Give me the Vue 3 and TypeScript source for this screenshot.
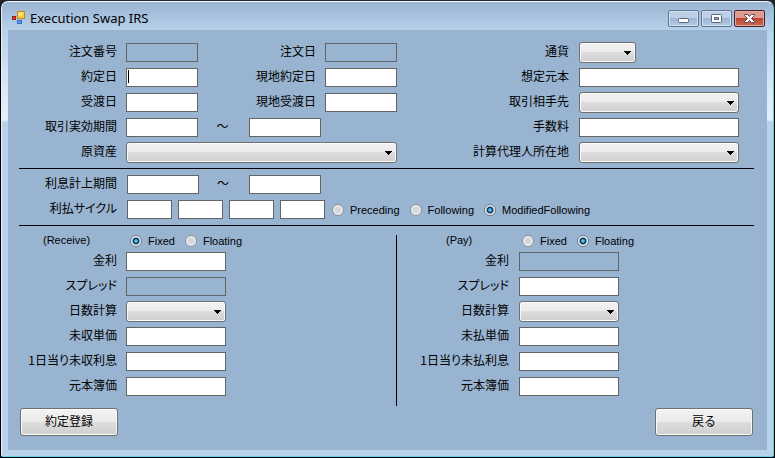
<script setup lang="ts">
import { onMounted, reactive, ref } from 'vue'

interface LegField {
  id: string
  label: string
  kind: 'text' | 'select'
  readonly?: boolean
}

interface Leg {
  name: string
  title: string
  fields: LegField[]
}

const legs: Leg[] = [
  {
    name: 'receive',
    title: '(Receive)',
    fields: [
      { id: 'rate', label: '金利', kind: 'text' },
      { id: 'spread', label: 'スプレッド', kind: 'text', readonly: true },
      { id: 'daycount', label: '日数計算', kind: 'select' },
      { id: 'accrued', label: '未収単価', kind: 'text' },
      { id: 'daily', label: '1日当り未収利息', kind: 'text' },
      { id: 'book', label: '元本簿価', kind: 'text' },
    ],
  },
  {
    name: 'pay',
    title: '(Pay)',
    fields: [
      { id: 'rate', label: '金利', kind: 'text', readonly: true },
      { id: 'spread', label: 'スプレッド', kind: 'text' },
      { id: 'daycount', label: '日数計算', kind: 'select' },
      { id: 'accrued', label: '未払単価', kind: 'text' },
      { id: 'daily', label: '1日当り未払利息', kind: 'text' },
      { id: 'book', label: '元本簿価', kind: 'text' },
    ],
  },
]

const conventions = ['Preceding', 'Following', 'ModifiedFollowing']
const convention = ref('ModifiedFollowing')
const rateType = reactive<Record<string, string>>({ receive: 'Fixed', pay: 'Floating' })
const tradeDate = ref<HTMLInputElement | null>(null)

onMounted(() => tradeDate.value?.focus())
</script>

<template>
  <div class="desktop">
    <div class="window">
      <header class="titlebar">
        <svg class="app-icon" viewBox="0 0 13 13" width="13" height="13" aria-hidden="true">
          <rect x="5.5" y="0.5" width="7" height="7" fill="#f8cf3c" stroke="#c08a1c" />
          <rect x="6.5" y="1.5" width="4" height="3" fill="#fdeb8c" />
          <rect x="0.5" y="5.5" width="3" height="3" fill="#d8452c" stroke="#9c1f14" />
          <rect x="5.5" y="9.5" width="4" height="3" fill="#5d9df0" stroke="#3a6cc4" />
        </svg>
        <h1 class="title">Execution Swap IRS</h1>
        <div class="caption-buttons">
          <button class="caption" type="button" aria-label="最小化">
            <svg viewBox="0 0 13 11" width="13" height="11">
              <rect x="1.5" y="5.5" width="10" height="4" rx="1" fill="#fff" stroke="#5a6679" />
            </svg>
          </button>
          <button class="caption" type="button" aria-label="最大化">
            <svg viewBox="0 0 13 11" width="13" height="11">
              <rect x="1.5" y="1.5" width="10" height="8" rx="1" fill="#fff" stroke="#5a6679" />
              <rect x="4.5" y="4.5" width="4" height="2" fill="#9db6d2" stroke="#5a6679" />
            </svg>
          </button>
          <button class="caption close" type="button" aria-label="閉じる">
            <svg viewBox="0 0 13 11" width="13" height="11">
              <path
                d="M1.5 1.5h3l2 2 2-2h3v1l-3 3 3 3v1h-3l-2-2-2 2h-3v-1l3-3-3-3z"
                fill="#fff"
                stroke="#5c4650"
              />
            </svg>
          </button>
        </div>
      </header>

      <form class="client" @submit.prevent>
        <section class="halves trade">
          <div>
            <div class="row">
              <label class="label" for="order-no">注文番号</label>
              <input id="order-no" class="box date" type="text" readonly />
              <label class="label second" for="order-date">注文日</label>
              <input id="order-date" class="box date" type="text" readonly />
            </div>
            <div class="row">
              <label class="label" for="trade-date">約定日</label>
              <input
                id="trade-date"
                ref="tradeDate"
                class="box date first-field"
                type="text"
                placeholder=" "
              />
              <label class="label second" for="local-trade-date">現地約定日</label>
              <input id="local-trade-date" class="box date" type="text" />
            </div>
            <div class="row">
              <label class="label" for="settle-date">受渡日</label>
              <input id="settle-date" class="box date" type="text" />
              <label class="label second" for="local-settle-date">現地受渡日</label>
              <input id="local-settle-date" class="box date" type="text" />
            </div>
            <div class="row">
              <label class="label" for="effective-from">取引実効期間</label>
              <input id="effective-from" class="box date" type="text" />
              <label class="tilde" for="effective-to">～</label>
              <input id="effective-to" class="box date" type="text" />
            </div>
            <div class="row">
              <label class="label" for="underlying">原資産</label>
              <select id="underlying" class="drop wide"></select>
            </div>
          </div>
          <div class="terms">
            <div class="row">
              <label class="label term" for="currency">通貨</label>
              <select id="currency" class="drop currency"></select>
            </div>
            <div class="row">
              <label class="label term" for="notional">想定元本</label>
              <input id="notional" class="box wide" type="text" />
            </div>
            <div class="row">
              <label class="label term" for="counterparty">取引相手先</label>
              <select id="counterparty" class="drop wide"></select>
            </div>
            <div class="row">
              <label class="label term" for="fee">手数料</label>
              <input id="fee" class="box wide" type="text" />
            </div>
            <div class="row">
              <label class="label term" for="agent">計算代理人所在地</label>
              <select id="agent" class="drop wide"></select>
            </div>
          </div>
        </section>

        <section class="schedule">
          <div class="row">
            <label class="label" for="accrual-from">利息計上期間</label>
            <input id="accrual-from" class="box date" type="text" />
            <label class="tilde" for="accrual-to">～</label>
            <input id="accrual-to" class="box date" type="text" />
          </div>
          <div class="row">
            <label class="label" for="cycle-1">利払サイクル</label>
            <div class="cycles">
              <input v-for="n in 4" :id="`cycle-${n}`" :key="n" class="box cycle" type="text" />
            </div>
            <div class="radios">
              <label v-for="name in conventions" :key="name" class="radio">
                <input v-model="convention" type="radio" name="convention" :value="name" />
                {{ name }}
              </label>
            </div>
          </div>
        </section>

        <section class="legs">
          <div v-for="leg in legs" :key="leg.name" class="leg" :class="leg.name">
            <div class="row heading">
              <span class="leg-title">{{ leg.title }}</span>
              <div class="radios">
                <label v-for="type in ['Fixed', 'Floating']" :key="type" class="radio">
                  <input
                    v-model="rateType[leg.name]"
                    type="radio"
                    :name="`${leg.name}-type`"
                    :value="type"
                  />
                  {{ type }}
                </label>
              </div>
            </div>
            <div v-for="field in leg.fields" :key="field.id" class="row">
              <label class="label" :for="`${leg.name}-${field.id}`">{{ field.label }}</label>
              <select
                v-if="field.kind === 'select'"
                :id="`${leg.name}-${field.id}`"
                class="drop amount"
              ></select>
              <input
                v-else
                :id="`${leg.name}-${field.id}`"
                class="box amount"
                type="text"
                :readonly="field.readonly"
              />
            </div>
          </div>
          <div class="divider"></div>
        </section>

        <footer class="actions">
          <button class="push" type="submit">約定登録</button>
          <button class="push" type="button">戻る</button>
        </footer>
      </form>
    </div>
  </div>
</template>

<style>
body {
  margin: 0;
  background: #000;
}
</style>

<style scoped>
.desktop {
  box-sizing: border-box;
  min-height: 100vh;
  padding: 1px;
  display: flex;
  background: linear-gradient(#24262b, #000 30px);
  color: #000;
  font: 12px/16px 'Noto Sans CJK JP', sans-serif;
}

.desktop * {
  box-sizing: border-box;
}

.window {
  flex: 1;
  display: flex;
  flex-direction: column;
  padding: 0 6px 6px;
  border: 1px solid #5fd0e8;
  border-top-color: #f0f7ff;
  border-left-color: #e6f1fb;
  border-radius: 7px 7px 2px 2px;
  background: linear-gradient(#9ab3d2, #b7d0ea 28px, #dce9f7 90px, #e4effa 118px, #b9d1ea 120px);
}

.titlebar {
  display: flex;
  align-items: center;
  height: 28px;
  padding: 4px 2px 0 4px;
}

.app-icon {
  margin-bottom: 2px;
}

.title {
  flex: 1;
  margin: 0 0 0 5px;
  font: 13px/18px 'Noto Sans', sans-serif;
}

.caption-buttons {
  display: flex;
  gap: 2px;
}

.caption {
  display: flex;
  align-items: center;
  justify-content: center;
  width: 31px;
  height: 17px;
  padding: 0;
  border: 1px solid #61748f;
  border-radius: 2px;
  background: linear-gradient(#bccfe6 45%, #9bb5d3 50%, #b4cce6);
  box-shadow: inset 0 0 0 1px #d3e1f1;
}

.close {
  border-color: #4a1f2a;
  background: linear-gradient(#dc9a90 45%, #bd4632 50%, #c96a50);
  box-shadow: inset 0 0 0 1px #e2aca2;
}

.client {
  flex: 1;
  padding: 10px 13px 14px 11px;
  background: #99b4d1;
}

.halves {
  display: grid;
  grid-template-columns: 378fr 357fr;
}

.trade {
  padding-bottom: 3px;
}

.terms {
  padding-right: 15px;
}

.schedule {
  padding: 3px 0;
  border: solid #000;
  border-width: 1px 0;
}

.row {
  display: flex;
  align-items: center;
  height: 25px;
}

.label {
  flex: none;
  width: 98px;
  margin-right: 9px;
  padding-bottom: 4px;
  text-align: right;
  white-space: nowrap;
  font-feature-settings: 'palt';
}

.second {
  width: 118px;
}

.term {
  width: 172px;
  margin-right: 10px;
}

.schedule .label {
  margin-right: 10px;
}

.tilde {
  width: 51px;
  padding: 0 2px 4px 0;
  text-align: center;
}

.schedule .tilde {
  width: 50px;
}

.box {
  width: 72px;
  height: 19px;
  padding: 0 2px;
  border: 1px solid #646464;
  border-radius: 0;
  outline: none;
  background: #fff;
  font: inherit;
}

.box:read-only {
  background: #99b4d1;
}

.first-field:focus:placeholder-shown {
  background: linear-gradient(#000, #000) 1px 1px / 1px 13px no-repeat #fff;
  caret-color: transparent;
}

.drop {
  height: 21px;
  padding: 0 20px 0 4px;
  border: 1px solid #707070;
  border-radius: 3px;
  appearance: none;
  background:
    conic-gradient(from -45deg at 50% 100%, #000 90deg, transparent 0) right 4px top 8px / 7px 4px no-repeat,
    linear-gradient(#f2f2f2, #ebebeb 50%, #dddddd 50%, #cfcfcf);
  box-shadow: inset 0 0 0 1px #fafafa;
  font: inherit;
}

.wide {
  flex: 1;
  width: auto;
  min-width: 0;
}

.currency {
  width: 57px;
}

.amount {
  width: 100px;
}

.cycles {
  display: flex;
  gap: 6px;
}

.cycle {
  width: 45px;
}

.radios {
  display: flex;
  gap: 10px;
  margin-left: 7px;
}

.radio {
  display: flex;
  align-items: center;
  gap: 6px;
  white-space: nowrap;
  font: 11px/16px 'Liberation Sans', sans-serif;
}

.radio input {
  width: 12px;
  height: 12px;
  margin: 0;
  border: 1px solid #8b9099;
  border-radius: 50%;
  appearance: none;
  background: radial-gradient(circle, #d3d6da 2px, #e4e6e8 4px, #f6f6f6 5px);
}

.radio input:checked {
  border-color: #6e7a88;
  background: radial-gradient(circle at 50% 50%, #5fc4ea 1px, #17629a 2px, #0c3556 3px, #f2f4f6 4px);
}

.legs {
  display: grid;
  grid-template-columns: 377fr 1px 357fr;
}

.receive,
.pay,
.divider {
  grid-row: 1;
}

.receive {
  grid-column: 1;
}

.pay {
  grid-column: 3;
}

.divider {
  grid-column: 2;
  margin: 9px 0 -7px;
  background: #000;
}

.pay .label {
  width: 112px;
  margin-right: 10px;
}

.heading {
  height: 23px;
  padding-top: 7px;
}

.heading .radios {
  margin-left: 4px;
}

.leg-title {
  flex: none;
  width: 83px;
  margin-left: 24px;
  padding-bottom: 2px;
  font: 11px/16px 'Liberation Sans', sans-serif;
}

.pay .leg-title {
  width: 72px;
  margin-left: 49px;
}

.actions {
  display: flex;
  justify-content: space-between;
  padding: 9px 1px 0;
}

.push {
  width: 98px;
  height: 28px;
  padding: 0 0 2px;
  border: 1px solid #707070;
  border-radius: 3px;
  background: linear-gradient(#f2f2f2, #ebebeb 50%, #dddddd 50%, #cfcfcf);
  box-shadow: inset 0 0 0 1px #fafafa;
  color: #000;
  font: inherit;
}
</style>
